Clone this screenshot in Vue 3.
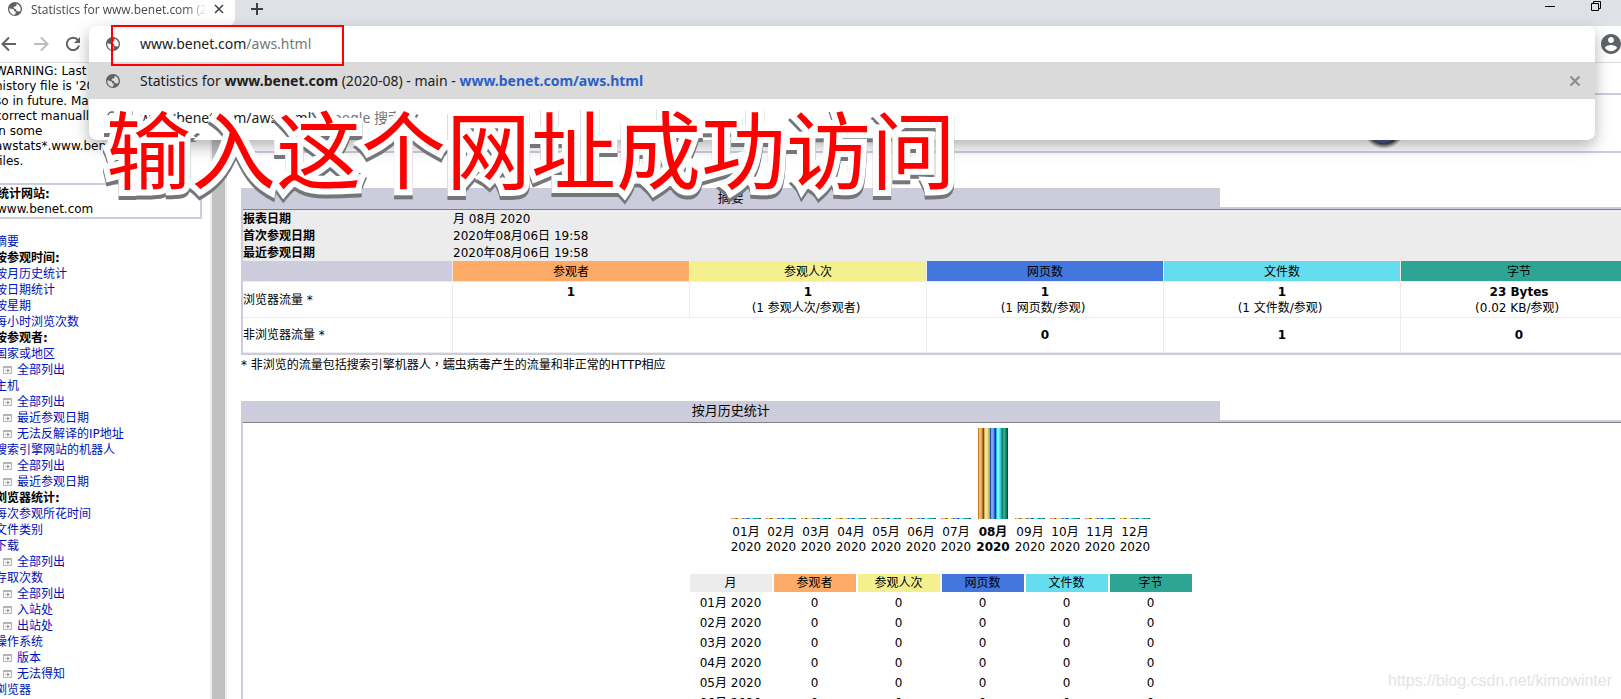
<script setup>
const warning = [
  'WARNING: Last',
  "history file is '2020",
  'so in future. May',
  'correct manually',
  'in some',
  'awstats*.www.benet',
  'files.'
]

const nav = [
  { text: '摘要' },
  { text: '按参观时间:', kind: 'head' },
  { text: '按月历史统计' },
  { text: '按日期统计' },
  { text: '按星期' },
  { text: '每小时浏览次数' },
  { text: '按参观者:', kind: 'head' },
  { text: '国家或地区' },
  { text: '全部列出', kind: 'sub' },
  { text: '主机' },
  { text: '全部列出', kind: 'sub' },
  { text: '最近参观日期', kind: 'sub' },
  { text: '无法反解译的IP地址', kind: 'sub' },
  { text: '搜索引擎网站的机器人' },
  { text: '全部列出', kind: 'sub' },
  { text: '最近参观日期', kind: 'sub' },
  { text: '浏览器统计:', kind: 'head' },
  { text: '每次参观所花时间' },
  { text: '文件类别' },
  { text: '下载' },
  { text: '全部列出', kind: 'sub' },
  { text: '存取次数' },
  { text: '全部列出', kind: 'sub' },
  { text: '入站处', kind: 'sub' },
  { text: '出站处', kind: 'sub' },
  { text: '操作系统' },
  { text: '版本', kind: 'sub' },
  { text: '无法得知', kind: 'sub' },
  { text: '浏览器' }
]

const dates = [
  ['报表日期', '月 08月 2020'],
  ['首次参观日期', '2020年08月06日 19:58'],
  ['最近参观日期', '2020年08月06日 19:58']
]

const metrics = [
  { name: '参观者', tone: 'orange', value: '1', note: '' },
  { name: '参观人次', tone: 'yellow', value: '1', note: '(1 参观人次/参观者)' },
  { name: '网页数', tone: 'blue', value: '1', note: '(1 网页数/参观)' },
  { name: '文件数', tone: 'cyan', value: '1', note: '(1 文件数/参观)' },
  { name: '字节', tone: 'green', value: '23 Bytes', note: '(0.02 KB/参观)' }
]

const months = Array.from({ length: 12 }, (_, i) => ({
  label: String(i + 1).padStart(2, '0') + '月',
  current: i === 7
}))

const globe = 'M12 2C6.48 2 2 6.48 2 12s4.48 10 10 10 10-4.48 10-10S17.52 2 12 2zM11 20.300C7 19.800 3.900 16.500 3.900 12.300c0-.4 0-.8.1-1.200l5.200 1.200c1.200.2 1.500.8 1.500 1.700 0 1 .6 1.500 1.500 1.500.8 0 1 .6.8 1.400l-.9 3.300zM15.500 15.300c-1.200 0-1.600-.7-1.500-1.600.1-1-.4-1.500-1.400-1.700-1.300-.3-2.500-.6-2.500-1.800 0-1.300 1.200-1.700 2.300-1.800 1.300-.1 1.800-.9 1.800-2.100V4.500c3.500 1 5.900 4 5.900 7.500 0 1.200-.2 2.200-.7 3.200-.8.500-2.400.1-3.900.1z'
</script>

<template>
  <div class="browser">
    <header class="tabs">
      <div class="tab">
        <svg class="globe" viewBox="2 2 20 20"><path fill-rule="evenodd" :d="globe" /></svg>
        <span class="tab-title">Statistics for www.benet.com (2020-08)</span>
        <button class="icon-btn" aria-label="Close tab"><svg width="10" height="10" viewBox="0 0 10 10"><path d="M1 1l8 8M9 1l-8 8" stroke="#3c4043" stroke-width="1.500" fill="none" /></svg></button>
      </div>
      <button class="icon-btn new-tab" aria-label="New tab"><svg width="12" height="12" viewBox="0 0 12 12"><path d="M6 0v12M0 6h12" stroke="#3c4043" stroke-width="2" /></svg></button>
      <div class="window-btns">
        <button class="icon-btn" aria-label="Minimize"><svg width="10" height="10" viewBox="0 0 10 10"><path d="M0 5.500h10" stroke="#000" /></svg></button>
        <button class="icon-btn" aria-label="Restore"><svg width="10" height="10" viewBox="0 0 10 10"><path d="M.5 2.500h7v7h-7zM2.500 2.500v-2h7v7h-2" stroke="#000" fill="none" /></svg></button>
      </div>
    </header>

    <div class="toolbar">
      <button class="icon-btn" aria-label="Back"><svg width="16" height="16" viewBox="0 0 16 16"><path d="M15 8H2M8 1.500L1.500 8 8 14.500" stroke="#5f6368" stroke-width="2" fill="none" /></svg></button>
      <button class="icon-btn" aria-label="Forward"><svg width="16" height="16" viewBox="0 0 16 16"><path d="M1 8h13M8 1.500L14.500 8 8 14.500" stroke="#babcbe" stroke-width="2" fill="none" /></svg></button>
      <button class="icon-btn" aria-label="Reload"><svg width="16" height="16" viewBox="0 0 16 16"><path d="M13 4.200A6.200 6.200 0 1 0 14 9.500" stroke="#5f6368" stroke-width="2" fill="none" /><path d="M15 1v6H9z" fill="#5f6368" /></svg></button>
      <button class="icon-btn profile" aria-label="Profile"><svg width="20" height="20" viewBox="2 2 20 20"><path fill="#5f6368" d="M12 2C6.480 2 2 6.480 2 12s4.480 10 10 10 10-4.480 10-10S17.520 2 12 2zm0 3c1.660 0 3 1.340 3 3s-1.340 3-3 3-3-1.340-3-3 1.340-3 3-3zm0 14.200c-2.500 0-4.710-1.280-6-3.220.030-1.990 4-3.080 6-3.080 1.990 0 5.970 1.090 6 3.080-1.290 1.940-3.500 3.220-6 3.220z" /></svg></button>
    </div>

    <div class="frames">
      <aside class="side">
        <div class="side-scroll">
          <p class="warning"><template v-for="line in warning" :key="line">{{ line }}<br></template></p>
          <div class="site"><b>统计网站:</b><br>www.benet.com</div>
          <ul class="nav">
            <li v-for="(item, i) in nav" :key="i" :class="item.kind">
              <b v-if="item.kind === 'head'">{{ item.text }}</b>
              <template v-else>
                <svg v-if="item.kind === 'sub'" width="9" height="8" viewBox="0 0 9 8"><path d="M.5.500h8v7h-8z" fill="#f8f8f8" stroke="#b4b4b4" /><path d="M0 1h9" stroke="#b4b4b4" stroke-width="2" /><path d="M2 4.500h3M4.500 3v3l2-1.500z" fill="#999" stroke="#999" stroke-width=".6" /></svg>
                <a href="#">{{ item.text }}</a>
              </template>
            </li>
          </ul>
        </div>
      </aside>
      <div class="divider"></div>
      <main class="main">
        <div class="report">
          <div class="banner">
            <svg class="logo" width="44" height="42" viewBox="0 0 44 42">
              <defs><radialGradient id="ball"><stop offset="0.75" stop-color="#444" /><stop offset="1" stop-color="#777" stop-opacity="0" /></radialGradient></defs>
              <ellipse cx="23" cy="20" rx="21" ry="20" fill="url(#ball)" />
              <circle cx="21" cy="17" r="17" fill="#4a5690" />
            </svg>
          </div>

          <section class="block">
            <h2>摘要</h2>
            <div class="frame">
              <table class="summary">
                <colgroup><col class="first"><col v-for="m in metrics" :key="m.name"></colgroup>
                <tbody>
                  <tr v-for="d in dates" :key="d[0]" class="date"><th>{{ d[0] }}</th><td colspan="5">{{ d[1] }}</td></tr>
                  <tr class="heads"><td class="lav"></td><th v-for="m in metrics" :key="m.name" :class="m.tone">{{ m.name }}</th></tr>
                  <tr class="traffic">
                    <th>浏览器流量 *</th>
                    <td v-for="m in metrics" :key="m.name"><b>{{ m.value }}</b><br>{{ m.note }}&nbsp;</td>
                  </tr>
                  <tr class="traffic other">
                    <th>非浏览器流量 *</th>
                    <td colspan="2"></td><td><b>0</b></td><td><b>1</b></td><td><b>0</b></td>
                  </tr>
                </tbody>
              </table>
            </div>
            <p class="note">* 非浏览的流量包括搜索引擎机器人<span class="comma" lang="zh-TW">，</span>蠕虫病毒产生的流量和非正常的HTTP相应</p>
          </section>

          <section class="block">
            <h2>按月历史统计</h2>
            <div class="frame">
              <div class="chart">
                <div v-for="m in months" :key="m.label" class="month" :class="{ current: m.current }">
                  <div class="plot"><div class="bar"><i v-for="k in metrics" :key="k.name" :class="'bar-' + k.tone"></i></div></div>
                  <span>{{ m.label }}<br>2020</span>
                </div>
              </div>
              <table class="monthly">
                <thead><tr><th class="grey">月</th><th v-for="m in metrics" :key="m.name" :class="m.tone">{{ m.name }}</th></tr></thead>
                <tbody>
                  <tr v-for="m in months" :key="m.label"><td>{{ m.label }} 2020</td><td v-for="k in metrics" :key="k.name">{{ m.current ? 1 : 0 }}</td></tr>
                </tbody>
              </table>
            </div>
          </section>
        </div>
      </main>
    </div>

    <div class="omnibox">
      <div class="row address">
        <svg class="globe" viewBox="2 2 20 20"><path fill-rule="evenodd" :d="globe" /></svg>
        <span>www.benet.com<em>/aws.html</em></span>
      </div>
      <div class="row active">
        <svg class="globe" viewBox="2 2 20 20"><path fill-rule="evenodd" :d="globe" /></svg>
        <span>Statistics for <b>www.benet.com</b> (2020-08) - main - <b class="url">www.benet.com/aws.html</b></span>
        <button class="icon-btn remove" aria-label="Remove suggestion"><svg width="12" height="12" viewBox="0 0 12 12"><path d="M1.500 1.500l9 9M10.500 1.500l-9 9" stroke="#8a8a8a" stroke-width="2" /></svg></button>
      </div>
      <div class="row">
        <svg class="globe" viewBox="0 0 14 14"><path d="M9 9l4 4" stroke="#5f6368" stroke-width="2" /><circle cx="6" cy="5" r="4" fill="none" stroke="#5f6368" stroke-width="1.500" /></svg>
        <span>www.benet.com/aws.html<em> - Google 搜索</em></span>
      </div>
    </div>

    <div class="highlight"></div>
    <div class="caption">输入这个网址成功访问</div>
    <div class="watermark">https://blog.csdn.net/kimowinter</div>
  </div>
</template>

<style>
html, body { margin: 0; overflow: hidden; }
</style>

<style scoped>
.browser {
  position: relative;
  display: flex;
  flex-direction: column;
  height: 100vh;
  overflow: hidden;
  background: #fff;
  color: #000;
  font: 12px/15px "DejaVu Sans", "Noto Sans CJK SC", sans-serif;
}
.icon-btn { display: flex; padding: 0; border: 0; background: none; }
.globe { width: 14px; height: 14px; flex: none; fill: #5f6368; }

.tabs { display: flex; flex: none; height: 26px; background: #dee1e6; }
.tab {
  display: flex;
  align-items: flex-start;
  width: 219px;
  padding: 1px 8px 0;
  background: #fff;
  border-radius: 0 0 8px 0;
}
.tab .icon-btn { margin-top: 3px; }
.tab .globe { margin-top: 1px; }
.tab-title {
  width: 176px;
  margin: 0 7px 0 9px;
  overflow: hidden;
  white-space: nowrap;
  color: #45494d;
  font: 12px/17px "Open Sans", sans-serif;
  -webkit-mask-image: linear-gradient(to right, #000 88%, transparent);
  mask-image: linear-gradient(to right, #000 88%, transparent);
}
.new-tab { margin: 3px 0 0 16px; height: 12px; }
.window-btns { display: flex; gap: 36px; margin: 1px 20px 0 auto; height: 10px; }

.toolbar {
  display: flex;
  flex: none;
  align-items: center;
  gap: 16px;
  height: 36px;
  padding-left: 1px;
  border-bottom: 1px solid #dadce0;
}
.profile { margin-left: auto; }

.frames { display: flex; flex: 1; min-height: 0; }
.side { width: 210px; flex: none; overflow: hidden; }
.side-scroll { margin-left: -5px; }
.warning { margin: 1px 0 0; white-space: nowrap; }
.site { width: 203px; margin-top: 14px; border: 2px solid #ccccdd; padding-top: 2px; }
.nav { list-style: none; margin: 15px 0 0; padding: 0; line-height: 16px; white-space: nowrap; }
.nav li { height: 16px; }
.sub { display: flex; align-items: center; gap: 5px; padding-left: 8px; }
.nav a { color: #0011bb; text-decoration: none; }
.divider {
  width: 13px;
  flex: none;
  background: #c0c0c0;
  border: solid #ededed;
  border-width: 0 2px;
}
.main { flex: 1; min-width: 0; overflow: hidden; }
.report { margin: 30px -19px 0 14px; }
.banner { display: flex; height: 56px; border: 2px solid #ccccdd; }
.logo { margin: 14px 0 0 1118px; }

.block { margin-top: 35px; }
.block + .block { margin-top: 29px; }
h2 {
  width: 70%;
  margin: 0;
  background: #ccccdd;
  font-weight: 400;
  font-size: 13px;
  line-height: 19px;
  text-align: center;
}
.frame { border: 2px solid #ccccdd; }
table { border-collapse: separate; border-spacing: 0; }
th { font-weight: 400; }
td, th { padding: 0; }
.summary { width: 100%; table-layout: fixed; border-top: 1px solid #808088; }
.first { width: 210px; }
.date { background: #ececec; height: 17px; line-height: 16px; }
.date > * { padding-top: 1px; }
.date th { text-align: left; font-weight: 700; }
.heads { height: 21px; }
.heads > *, .traffic > * { border-right: 1px solid #ececec; border-bottom: 1px solid #ececec; }
.heads th { padding-top: 2px; }
.traffic { height: 36px; line-height: 16px; text-align: center; }
.traffic th { text-align: left; }
.other { height: 35px; }
.lav { background: #ccccdd; }
.grey { background: #ececec; }
.orange { background: #ffaa66; }
.yellow { background: #f4f090; }
.blue { background: #4477dd; }
.cyan { background: #66ddee; }
.green { background: #2ea495; }
.note { height: 17px; margin: 0; line-height: 17px; }
.comma { font-family: "Noto Sans CJK TC", sans-serif; }

.chart {
  display: flex;
  justify-content: center;
  border-top: 1px solid #808088;
  padding-top: 5px;
}
.month { width: 35px; text-align: center; }
.month.current { width: 39px; font-weight: 700; }
.plot { display: flex; align-items: flex-end; justify-content: center; height: 91px; margin-bottom: 6px; }
.bar { display: flex; width: 30px; height: 1px; }
.current .bar { height: 91px; }
.bar i { flex: 1; }
.bar-orange { background: linear-gradient(90deg, #cc7a18 1px, #f4b878 1px 3px, #e0a060 3px 4px, #b87430 4px 5px, #884400 5px); }
.bar-yellow { background: linear-gradient(90deg, #c8b450 1px, #f0e49c 1px 3px, #e8dc90 3px 4px, #d0c068 4px 5px, #b8a450 5px); }
.bar-blue { background: linear-gradient(90deg, #1850b8 1px, #80a4f0 1px 3px, #6890e8 3px 4px, #2860d8 4px 5px, #0838a8 5px); }
.bar-cyan { background: linear-gradient(90deg, #20c0d0 1px, #80f4f8 1px 3px, #60e0e8 3px 4px, #38c8d0 4px 5px, #18a0a8 5px); }
.bar-green { background: linear-gradient(90deg, #108068 1px, #30a890 1px 3px, #209078 3px 4px, #087858 4px 5px, #005838 5px); }
.monthly { margin: 17px auto 0; border-spacing: 2px; line-height: 18px; text-align: center; }
.monthly th, .monthly td { width: 82px; height: 18px; }

.omnibox {
  position: absolute;
  top: 26px;
  left: 89px;
  right: 26px;
  overflow: hidden;
  padding-bottom: 4px;
  border-radius: 8px;
  background: #fff;
  box-shadow: 0 6px 16px rgba(0, 0, 0, .3);
  color: #202124;
  font: 14px/20px "Noto Sans", "Noto Sans CJK SC", sans-serif;
  white-space: nowrap;
}
.row { display: flex; align-items: center; gap: 20px; height: 37px; padding: 0 14px 0 17px; }
.address { height: 36px; }
.row em { font-style: normal; color: #73777b; }
.active { background: #dadada; }
.url { color: #2a5fc8; }
.remove { margin-left: auto; }
.highlight {
  position: absolute;
  top: 25px;
  left: 111px;
  width: 229px;
  height: 37px;
  border: 2px solid #f00;
}
.caption {
  position: absolute;
  top: 90px;
  left: 106px;
  color: #f00;
  font: 85px/112px "Noto Sans CJK SC", sans-serif;
  white-space: nowrap;
  -webkit-text-stroke: 12px #fff;
  stroke-linejoin: round;
  paint-order: stroke fill;
  filter: drop-shadow(0 4px 0 #74767a);
}
.watermark {
  position: absolute;
  right: 9px;
  bottom: 8px;
  color: #e4e4e4;
  font: 16px/20px "Liberation Sans", sans-serif;
}
</style>
